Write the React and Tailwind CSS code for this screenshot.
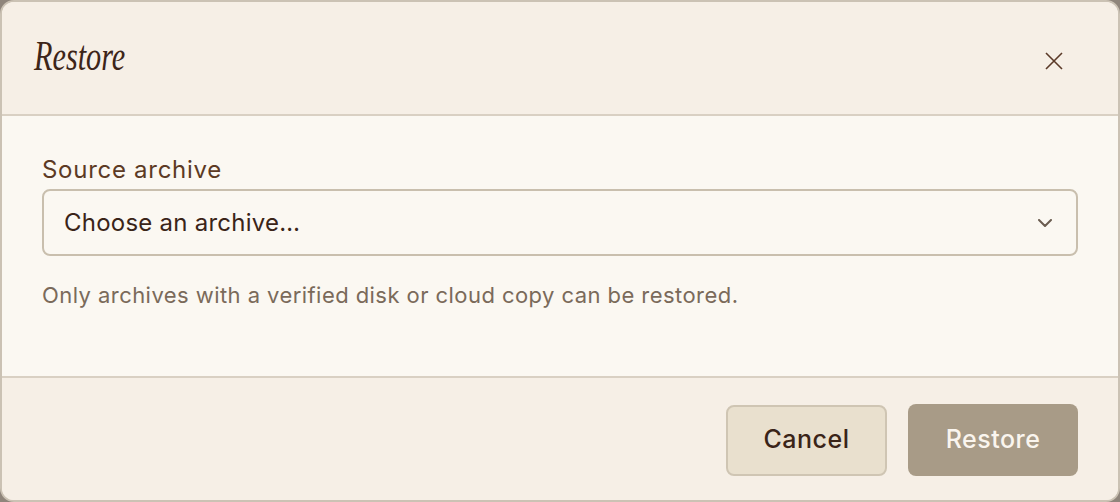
import React from "react";

export default function App() {
  return (
    <div className="w-[1120px] h-[502px] bg-[#8f857b]">
      <div className="w-full h-full flex flex-col rounded-[14px] border-2 border-[#cbc2b4] overflow-hidden bg-[#f6efe6]">
        <div className="h-[114px] shrink-0 flex items-start justify-between pl-[32px] pr-[55px] border-b-2 border-[#d9d0c3] bg-[#f6efe6]">
          <h2 className="mt-[30px] text-[42px] leading-[48px] italic text-[#3d2519] inline-block origin-left scale-x-[0.72] font-['Liberation_Serif',serif]">
            Restore
          </h2>
          <button className="mt-[50px] w-[18px] h-[18px] text-[#5b3a28]" aria-label="Close">
            <svg viewBox="0 0 18 18" width="18" height="18" fill="none" stroke="currentColor" strokeWidth="1.6">
              <path d="M1 1L17 17M17 1L1 17" />
            </svg>
          </button>
        </div>
        <div className="h-[262px] shrink-0 bg-[#fbf8f2] px-[40px] pt-[40px] font-['Inter',sans-serif] border-b-2 border-[#d9d0c3]">
          <label className="block text-[24px] leading-[28px] tracking-[0.03em] text-[#5c3a24]">Source archive</label>
          <div className="mt-[5px] h-[67px] rounded-[8px] border-2 border-[#c9bfae] bg-[#fbf8f2] flex items-center justify-between pl-[20px] pr-[24px]">
            <span className="text-[24px] tracking-[0.01em] text-[#3a2418]">Choose an archive…</span>
            <svg viewBox="0 0 14 8" width="14" height="8" fill="none" stroke="#6b5d50" strokeWidth="2" strokeLinecap="round" strokeLinejoin="round">
              <path d="M1 1L7 7L13 1" />
            </svg>
          </div>
          <p className="mt-[26px] text-[22px] leading-[26px] tracking-[0.02em] text-[#7a6a5a]">
            Only archives with a verified disk or cloud copy can be restored.
          </p>
        </div>
        <div className="flex-1 flex items-center justify-end gap-[21px] pr-[40px] pt-[2px] bg-[#f6efe6] font-['Inter',sans-serif]">
          <button className="w-[161px] h-[71px] rounded-[8px] border-2 border-[#cfc5b3] bg-[#e9e0ce] text-[25px] font-medium tracking-[0.02em] text-[#3a2418]">
            Cancel
          </button>
          <button className="w-[170px] h-[72px] rounded-[8px] bg-[#a89b87] text-[25px] font-medium tracking-[0.02em] text-[#faf5ee]">
            Restore
          </button>
        </div>
      </div>
    </div>
  );
}
